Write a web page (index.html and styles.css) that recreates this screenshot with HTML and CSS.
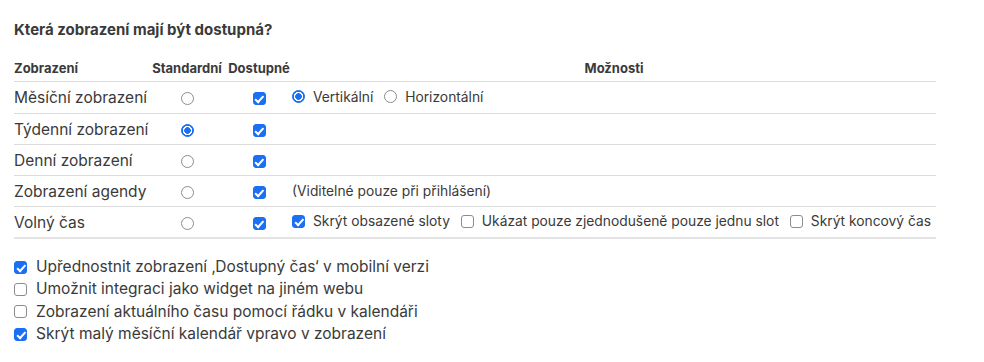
FILE: index.html
```html
<!DOCTYPE html>
<html lang="cs">
<head>
    <meta charset="UTF-8">
    <meta name="viewport" content="width=device-width, initial-scale=1.0">
    <title>Zobrazení</title>
    <link rel="stylesheet" href="styles.css">
</head>
<body>
    <div class="page">
        <!-- nadpis -->
        <h3 class="title">Která zobrazení mají být dostupná?</h3>

        <!-- tabulka zobrazení -->
        <table class="views">
            <thead>
                <tr>
                    <th class="col-name">Zobrazení</th>
                    <th class="col-std">Standardní</th>
                    <th class="col-avail">Dostupné</th>
                    <th class="col-opts">Možnosti</th>
                </tr>
            </thead>
            <tbody>
                <tr>
                    <td>Měsíční zobrazení</td>
                    <td class="center"><input type="radio" name="std"></td>
                    <td class="center"><input type="checkbox" checked></td>
                    <td class="opts">
                        <label><input type="radio" name="month" checked>Vertikální</label>
                        <label><input type="radio" name="month">Horizontální</label>
                    </td>
                </tr>
                <tr>
                    <td>Týdenní zobrazení</td>
                    <td class="center"><input type="radio" name="std" checked></td>
                    <td class="center"><input type="checkbox" checked></td>
                    <td class="opts"></td>
                </tr>
                <tr>
                    <td>Denní zobrazení</td>
                    <td class="center"><input type="radio" name="std"></td>
                    <td class="center"><input type="checkbox" checked></td>
                    <td class="opts"></td>
                </tr>
                <tr>
                    <td>Zobrazení agendy</td>
                    <td class="center"><input type="radio" name="std"></td>
                    <td class="center"><input type="checkbox" checked></td>
                    <td class="opts">(Viditelné pouze při přihlášení)</td>
                </tr>
                <tr class="last">
                    <td>Volný čas</td>
                    <td class="center"><input type="radio" name="std"></td>
                    <td class="center"><input type="checkbox" checked></td>
                    <td class="opts">
                        <label><input type="checkbox" checked>Skrýt obsazené sloty</label>
                        <label><input type="checkbox">Ukázat pouze zjednodušeně pouze jednu slot</label>
                        <label><input type="checkbox">Skrýt koncový čas</label>
                    </td>
                </tr>
            </tbody>
        </table>

        <!-- další nastavení -->
        <div class="extra">
            <label><input type="checkbox" checked>Upřednostnit zobrazení ‚Dostupný čas‘ v mobilní verzi</label>
            <label><input type="checkbox">Umožnit integraci jako widget na jiném webu</label>
            <label><input type="checkbox">Zobrazení aktuálního času pomocí řádku v kalendáři</label>
            <label><input type="checkbox" checked>Skrýt malý měsíční kalendář vpravo v zobrazení</label>
        </div>
    </div>
</body>
</html>
```

FILE: styles.css
```css
/* základ stránky */
body {
    margin: 0;
    background: #fff;
    color: #3a3a3a;
    font-family: Inter, "Liberation Sans", sans-serif;
}

.page {
    padding: 20px 14px 0 14px;
    width: 922px;
}

/* nadpis */
.title {
    margin: 0 0 18px 0;
    font-size: 15px;
    line-height: 20px;
    font-weight: 700;
    color: #3a3a3a;
}

/* tabulka */
.views {
    width: 922px;
    border-collapse: collapse;
    table-layout: fixed;
}

.views th {
    font-size: 13px;
    font-weight: 700;
    color: #3a3a3a;
    padding: 2px 0 5px 0;
    border-bottom: 1px solid #dcdcdc;
    white-space: nowrap;
}

.col-name { width: 134px; text-align: left; }
.col-std { width: 78px; text-align: center; }
.col-avail { width: 66px; text-align: center; }
.col-opts { text-align: center; }

.views td {
    height: 30px;
    padding: 0;
    font-size: 15.5px;
    border-bottom: 1px solid #dcdcdc;
    white-space: nowrap;
}

.views tbody tr:first-child td {
    height: 31px;
}

.views tr.last td {
    border-bottom: 2px solid #e4e4e4;
}

.views td.center {
    text-align: center;
}

.views td.center input {
    margin: 0;
    vertical-align: middle;
}

/* možnosti */
.views td.opts {
    font-size: 13.8px;
}

.opts label {
    display: inline-flex;
    align-items: center;
    margin-right: 7px;
}

.opts label:last-child {
    margin-right: 0;
}

.opts input {
    margin: 0 8px 0 0;
}

/* vlastní checkboxy a radia */
input[type="checkbox"],
input[type="radio"] {
    appearance: none;
    -webkit-appearance: none;
    width: 13px;
    height: 13px;
    box-sizing: border-box;
    border: 1px solid #8c8c8c;
    background: #fff;
    position: relative;
    flex: none;
}

input[type="checkbox"] {
    border-radius: 3px;
}

input[type="checkbox"]:checked {
    background: #1a6ff2;
    border-color: #1a6ff2;
}

input[type="checkbox"]:checked::after {
    content: "";
    position: absolute;
    left: 3.5px;
    top: 1px;
    width: 3px;
    height: 6.5px;
    border: solid #fff;
    border-width: 0 2px 2px 0;
    transform: rotate(42deg);
}

input[type="radio"] {
    border-radius: 50%;
}

input[type="radio"]:checked {
    border-color: #1a6ff2;
    background: radial-gradient(circle, #1a6ff2 0 3px, #fff 3.6px 4.4px, #1a6ff2 5px);
}

/* spodní volby */
.extra {
    padding-top: 17px;
    display: flex;
    flex-direction: column;
}

.extra label {
    display: flex;
    align-items: center;
    font-size: 15.5px;
    line-height: 22.3px;
}

.extra input {
    margin: 0 9px 0 0;
}
```
